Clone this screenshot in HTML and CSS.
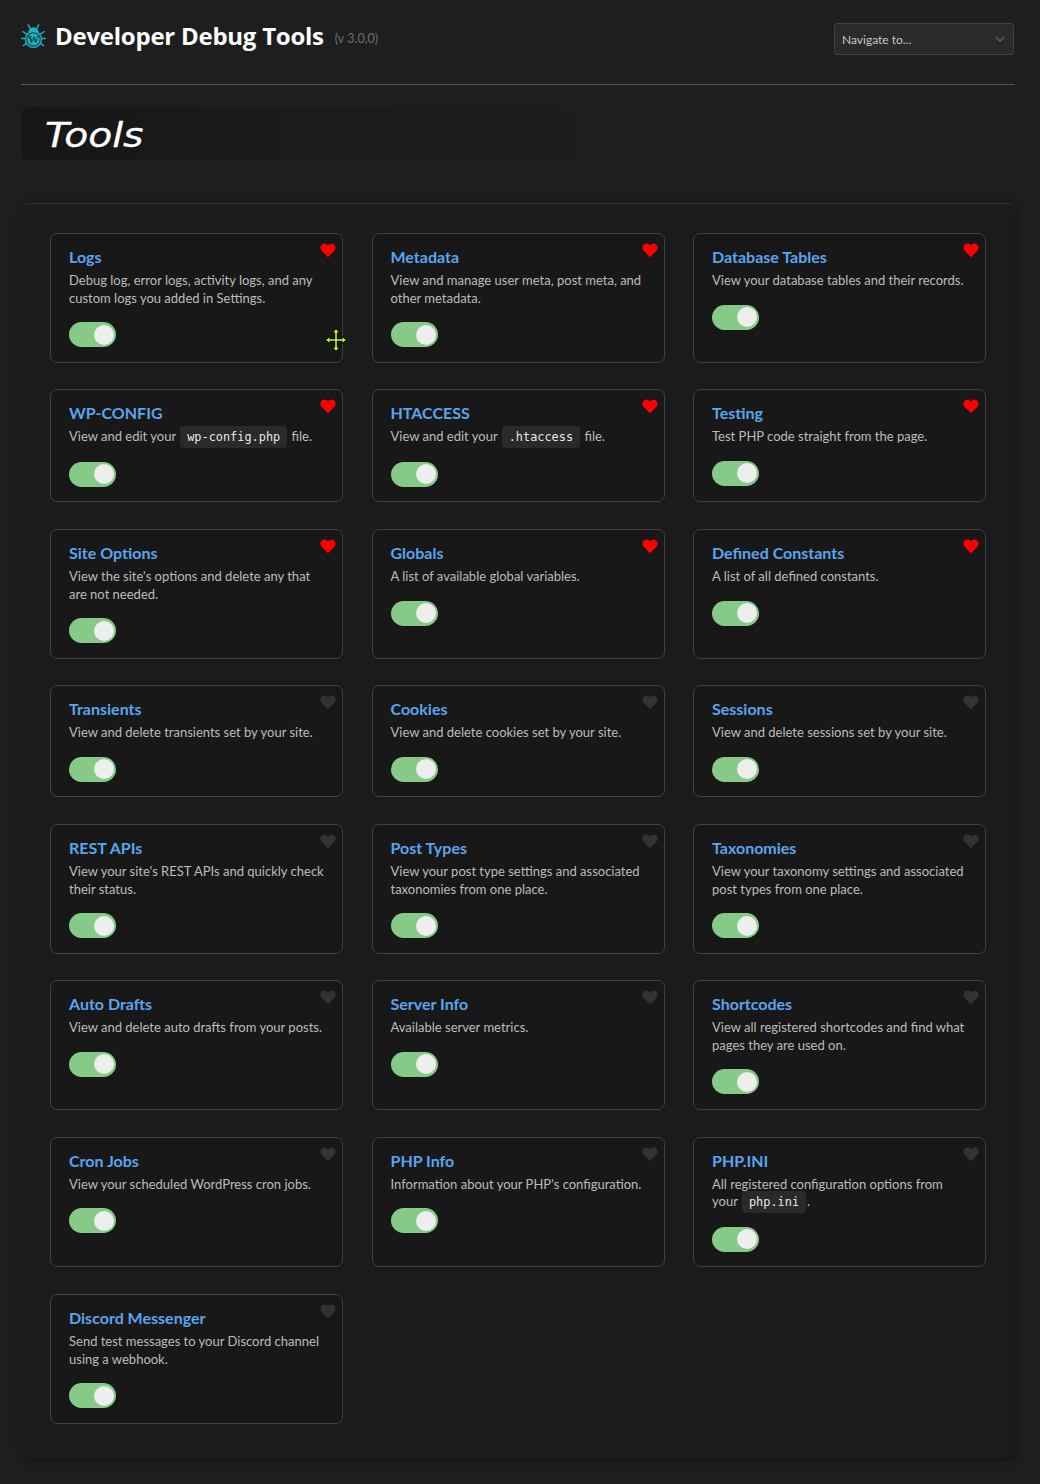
FILE: index.html
```html
<!DOCTYPE html>
<html lang="en">
<head>
<meta charset="utf-8">
<title>Developer Debug Tools</title>
<link rel="stylesheet" href="styles.css">
</head>
<body>
<svg class="sprite" width="0" height="0" aria-hidden="true"><defs>
<symbol id="heart" viewBox="0 0 16 16"><path d="M8 15.200 1.600 8.700C-.2 6.800.1 3.600 2.200 2.200 4.200.9 6.600 1.500 8 3.600 9.400 1.500 11.800.9 13.800 2.200c2.100 1.400 2.400 4.600.6 6.500z"/></symbol>
</defs></svg>
<header class="top">
  <div class="brand">
    <svg class="bug" viewBox="0 0 26 26" aria-hidden="true">
      <g fill="none" stroke="#1fb0c4" stroke-width="1.500" stroke-linecap="round">
        <path d="M7.500 1 9.500 4.500M18.500 1 16.500 4.500M2 8l4 2.500M24 8l-4 2.500M.8 15h4M25.200 15h-4M2.500 22.500l4-3M23.500 22.500l-4-3"/>
      </g>
      <path fill="#1fb0c4" d="M7.500 9a5.500 5.500 0 0 1 11 0z"/>
      <circle cx="13" cy="16" r="9" fill="#1fb0c4"/>
      <circle cx="13" cy="16" r="7" fill="none" stroke="#103a42" stroke-width="1.100"/>
      <text x="13" y="20.200" class="bug-w">W</text>
    </svg>
    <h1 class="brand-name">Developer Debug Tools</h1>
    <span class="version">(v 3.0.0)</span>
  </div>
  <div class="nav-select">
    <span>Navigate to...</span>
    <svg class="chevron" viewBox="0 0 10 6" aria-hidden="true"><path d="M1 1l4 4 4-4"/></svg>
  </div>
</header>
<hr class="rule">
<div class="page-title"><h2>Tools</h2></div>
<main class="panel">
  <div class="grid">
    <article class="card"><svg class="heart on"><use href="#heart"/></svg><h3>Logs</h3><p>Debug log, error logs, activity logs, and any custom logs you added in Settings.</p><span class="toggle"></span></article>
    <article class="card"><svg class="heart on"><use href="#heart"/></svg><h3>Metadata</h3><p>View and manage user meta, post meta, and other metadata.</p><span class="toggle"></span></article>
    <article class="card"><svg class="heart on"><use href="#heart"/></svg><h3>Database Tables</h3><p>View your database tables and their records.</p><span class="toggle"></span></article>

    <article class="card"><svg class="heart on"><use href="#heart"/></svg><h3>WP-CONFIG</h3><p>View and edit your <code>wp-config.php</code> file.</p><span class="toggle"></span></article>
    <article class="card"><svg class="heart on"><use href="#heart"/></svg><h3>HTACCESS</h3><p>View and edit your <code>.htaccess</code> file.</p><span class="toggle"></span></article>
    <article class="card"><svg class="heart on"><use href="#heart"/></svg><h3>Testing</h3><p>Test PHP code straight from the page.</p><span class="toggle"></span></article>

    <article class="card"><svg class="heart on"><use href="#heart"/></svg><h3>Site Options</h3><p>View the site's options and delete any that are not needed.</p><span class="toggle"></span></article>
    <article class="card"><svg class="heart on"><use href="#heart"/></svg><h3>Globals</h3><p>A list of available global variables.</p><span class="toggle"></span></article>
    <article class="card"><svg class="heart on"><use href="#heart"/></svg><h3>Defined Constants</h3><p>A list of all defined constants.</p><span class="toggle"></span></article>

    <article class="card"><svg class="heart"><use href="#heart"/></svg><h3>Transients</h3><p>View and delete transients set by your site.</p><span class="toggle"></span></article>
    <article class="card"><svg class="heart"><use href="#heart"/></svg><h3>Cookies</h3><p>View and delete cookies set by your site.</p><span class="toggle"></span></article>
    <article class="card"><svg class="heart"><use href="#heart"/></svg><h3>Sessions</h3><p>View and delete sessions set by your site.</p><span class="toggle"></span></article>

    <article class="card"><svg class="heart"><use href="#heart"/></svg><h3>REST APIs</h3><p>View your site's REST APIs and quickly check their status.</p><span class="toggle"></span></article>
    <article class="card"><svg class="heart"><use href="#heart"/></svg><h3>Post Types</h3><p>View your post type settings and associated taxonomies from one place.</p><span class="toggle"></span></article>
    <article class="card"><svg class="heart"><use href="#heart"/></svg><h3>Taxonomies</h3><p>View your taxonomy settings and associated post types from one place.</p><span class="toggle"></span></article>

    <article class="card"><svg class="heart"><use href="#heart"/></svg><h3>Auto Drafts</h3><p>View and delete auto drafts from your posts.</p><span class="toggle"></span></article>
    <article class="card"><svg class="heart"><use href="#heart"/></svg><h3>Server Info</h3><p>Available server metrics.</p><span class="toggle"></span></article>
    <article class="card"><svg class="heart"><use href="#heart"/></svg><h3>Shortcodes</h3><p>View all registered shortcodes and find what pages they are used on.</p><span class="toggle"></span></article>

    <article class="card"><svg class="heart"><use href="#heart"/></svg><h3>Cron Jobs</h3><p>View your scheduled WordPress cron jobs.</p><span class="toggle"></span></article>
    <article class="card"><svg class="heart"><use href="#heart"/></svg><h3>PHP Info</h3><p>Information about your PHP's configuration.</p><span class="toggle"></span></article>
    <article class="card"><svg class="heart"><use href="#heart"/></svg><h3>PHP.INI</h3><p>All registered configuration options from your <code>php.ini</code>.</p><span class="toggle"></span></article>

    <article class="card"><svg class="heart"><use href="#heart"/></svg><h3>Discord Messenger</h3><p>Send test messages to your Discord channel using a webhook.</p><span class="toggle"></span></article>
  </div>
</main>
<svg class="cursor" viewBox="0 0 22 24" aria-hidden="true">
  <path class="cursor-edge" d="M11 3v18M3 12h16"/>
  <path class="cursor-head" d="M11 .5 14.500 5h-7zM11 23.500 7.500 19h7zM.5 12 5 8.500v7zM21.500 12 17 15.500v-7z"/>
  <path class="cursor-line" d="M11 3v18M3 12h16"/>
</svg>
</body>
</html>
```
FILE: styles.css
```css
* { box-sizing: border-box; }
html, body { margin: 0; height: 1484px; overflow: hidden; }
body {
  position: relative;
  padding: 0 26px 0 21px;
  background: #1e1e1e;
  color: #b8b8b8;
  font-family: Lato, "Open Sans", sans-serif;
  font-size: 13px;
}
.sprite { position: absolute; }
.top {
  display: flex;
  align-items: flex-start;
  justify-content: space-between;
  height: 84px;
  padding-top: 23px;
}
.brand { display: flex; align-items: center; height: 26px; }
.bug { width: 25px; height: 25px; margin-right: 9px; flex: none; }
.bug-w { font-family: "Liberation Serif", serif; font-size: 11.500px; font-weight: 700; fill: #103a42; text-anchor: middle; }
.brand-name {
  margin: 0;
  font-family: "Open Sans", sans-serif;
  font-size: 24px;
  line-height: 26px;
  font-weight: 700;
  letter-spacing: -.25px;
  color: #fff;
  white-space: nowrap;
}
.version { margin: 5px 0 0 11px; font-size: 12.500px; color: #6f6f6f; }
.nav-select {
  display: flex;
  align-items: center;
  justify-content: space-between;
  width: 180px;
  height: 32px;
  padding: 0 8px 0 7px;
  background: #2a2a2a;
  border: 1px solid #414141;
  border-radius: 3px;
  color: #c8c8c8;
  font-size: 12px;
}
.chevron { width: 10px; height: 6px; fill: none; stroke: #666; stroke-width: 1.300; }
.rule { height: 1px; margin: 0 -1px 0 0; border: 0; background: #555; }
.page-title {
  height: 53px;
  margin-top: 22px;
  padding-left: 24px;
  border-radius: 8px;
  background: linear-gradient(90deg, #171717, #1e1e1e 60%);
}
.page-title h2 {
  display: inline-block;
  margin: 0;
  font-family: "DejaVu Sans", sans-serif;
  font-size: 33px;
  line-height: 57px;
  font-style: italic;
  font-weight: 400;
  color: #fff;
  -webkit-text-stroke: .3px #fff;
  transform: scaleX(1.190);
  transform-origin: left center;
}
.panel {
  margin-top: 43px;
  margin-right: -1px;
  height: 1255px;
  padding: 29px 29px 0;
  background: #1b1b1b;
  border-top: 1px solid #333;
  border-radius: 8px;
  box-shadow: 1px 2px 8px rgba(0, 0, 0, .35);
}
.grid {
  display: grid;
  grid-template-columns: repeat(3, 1fr);
  column-gap: 28.500px;
  row-gap: 26.800px;
  align-items: stretch;
}
.card {
  position: relative;
  padding: 11px 18px 14.500px;
  background: #181818;
  border: 1px solid #414141;
  border-radius: 7px;
}
.card h3 {
  margin: 0 0 4px;
  font-size: 16px;
  line-height: 23px;
  font-weight: 700;
  color: #5aa5ef;
}
.card p {
  margin: 0;
  font-size: 13px;
  line-height: 17.500px;
  color: #bcbcbc;
}
code {
  margin: 0 1px;
  padding: 4px 7px;
  background: #2a2a2a;
  border-radius: 4px;
  color: #e8e8e8;
  font-family: "DejaVu Sans Mono", monospace;
  font-size: 11.900px;
}
.toggle {
  position: relative;
  display: block;
  width: 47px;
  height: 25px;
  margin-top: 15px;
  border-radius: 13px;
  background: #86ca88;
}
.toggle::after {
  content: "";
  position: absolute;
  top: 2.500px;
  right: 2px;
  width: 20px;
  height: 20px;
  border-radius: 50%;
  background: #eeeeee;
}
.heart {
  position: absolute;
  top: 8px;
  right: 6px;
  width: 16px;
  height: 16px;
  fill: #333;
}
.heart.on { fill: #f00; }
.cursor { position: absolute; left: 325px; top: 328px; width: 22px; height: 24px; }
.cursor-edge { fill: none; stroke: #000; stroke-width: 4; }
.cursor-line { fill: none; stroke: #c8ff00; stroke-width: 1.600; }
.cursor-head { fill: #c8ff00; stroke: #000; stroke-width: 1; }
```
